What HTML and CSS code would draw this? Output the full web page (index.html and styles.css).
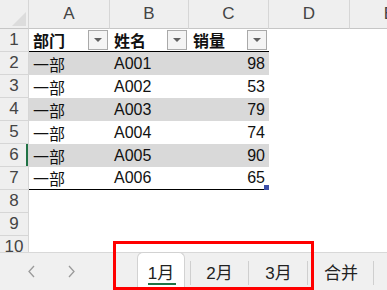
FILE: index.html
```html
<!DOCTYPE html>
<html lang="zh-CN">
<head>
    <meta charset="UTF-8">
    <meta name="viewport" content="width=device-width, initial-scale=1.0">
    <title>销量表</title>
    <link rel="stylesheet" href="styles.css">
</head>
<body>
    <div class="workbook">
        <div class="sheet">
            <div class="grid">
                <div class="corner">
                    <svg width="29" height="29" viewBox="0 0 29 29"><polygon points="26,12 26,26 12,26" fill="#dcdcdc"/></svg>
                </div>
                <div class="col-head">A</div>
                <div class="col-head">B</div>
                <div class="col-head">C</div>
                <div class="col-head">D</div>
                <div class="col-head">E</div>

                <div class="row-head">1</div>
                <div class="cell title">部门<span class="filter"></span></div>
                <div class="cell title">姓名<span class="filter"></span></div>
                <div class="cell title">销量<span class="filter"></span></div>
                <div class="cell"></div>
                <div class="cell"></div>
            </div>
            <div class="grid" id="rows"></div>
        </div>

        <div class="tab-bar">
            <div class="nav">
                <svg width="9" height="13" viewBox="0 0 9 13"><polyline points="7,1 2,6.5 7,12" fill="none" stroke="#9a9a9a" stroke-width="1.3"/></svg>
                <svg width="9" height="13" viewBox="0 0 9 13"><polyline points="2,1 7,6.5 2,12" fill="none" stroke="#9a9a9a" stroke-width="1.3"/></svg>
            </div>
            <div class="tabs">
                <div class="tab active">1月</div>
                <div class="tab first">2月</div>
                <div class="tab">3月</div>
                <div class="tab wide">合并</div>
            </div>
        </div>

        <div class="highlight"></div>
    </div>

    <script>
        const data = [
            ['一部', 'A001', 98],
            ['一部', 'A002', 53],
            ['一部', 'A003', 79],
            ['一部', 'A004', 74],
            ['一部', 'A005', 90],
            ['一部', 'A006', 65]
        ];

        const rows = document.getElementById('rows');
        let html = '';
        for (let r = 2; r <= 10; r++) {
            const item = data[r - 2];
            const band = item && r % 2 === 0 ? ' band' : '';
            const last = r === 7 ? ' last' : '';
            html += `<div class="row-head${r === 6 ? ' current' : ''}">${r}</div>`;
            if (item) {
                html += `<div class="cell${band}${last}">${item[0]}</div>`;
                html += `<div class="cell${band}${last}">${item[1]}</div>`;
                html += `<div class="cell num${band}${last}">${item[2]}${r === 7 ? '<span class="handle"></span>' : ''}</div>`;
            } else {
                html += '<div class="cell"></div><div class="cell"></div><div class="cell"></div>';
            }
            html += '<div class="cell"></div><div class="cell"></div>';
        }
        rows.innerHTML = html;
    </script>
</body>
</html>
```

FILE: styles.css
```css
body {
    margin: 0;
    font-family: "Liberation Sans", "Noto Sans CJK SC", sans-serif;
    font-size: 16px;
    color: #111;
    background: #fff;
}

.workbook {
    position: relative;
    width: 387px;
    height: 290px;
    overflow: hidden;
}

.sheet {
    height: 252px;
    overflow: hidden;
}

.grid {
    display: grid;
    grid-template-columns: 29px 81px 79px 80px 81px 80px;
    grid-auto-rows: 23px;
}

.grid:first-child {
    grid-template-rows: 29px 23px;
}

.corner,
.col-head {
    background: #efefef;
    border-right: 1px solid #d6d6d6;
    border-bottom: 1px solid #c6c6c6;
    box-sizing: border-box;
}

.col-head {
    display: flex;
    align-items: center;
    justify-content: center;
    color: #444;
    font-size: 17px;
}

.row-head {
    background: #efefef;
    border-right: 1px solid #d6d6d6;
    border-bottom: 1px solid #d6d6d6;
    box-sizing: border-box;
    display: flex;
    align-items: center;
    justify-content: center;
    color: #444;
    font-size: 17px;
}

.row-head.current {
    box-shadow: inset -2px 0 0 #217346;
}

.cell {
    position: relative;
    display: flex;
    align-items: center;
    justify-content: space-between;
    padding: 0 2px 0 4px;
    box-sizing: border-box;
    white-space: nowrap;
}

.cell.title {
    font-weight: bold;
    border-bottom: 1px solid #000;
}

.cell.band {
    background: #d9d9d9;
}

.cell.last {
    border-bottom: 1px solid #000;
}

.cell.num {
    justify-content: flex-end;
    padding-right: 4px;
}

.filter {
    width: 20px;
    height: 20px;
    box-sizing: border-box;
    border: 1px solid #a9a9a9;
    background: #f4f4f4;
    display: flex;
    align-items: center;
    justify-content: center;
}

.filter::after {
    content: "";
    border-left: 4px solid transparent;
    border-right: 4px solid transparent;
    border-top: 4px solid #606060;
}

.handle {
    position: absolute;
    right: 0;
    bottom: -1px;
    width: 5px;
    height: 5px;
    background: #3c4fa8;
}

.tab-bar {
    height: 38px;
    background: #f0f0f0;
    border-top: 1px solid #d8d8d8;
    box-sizing: border-box;
    display: flex;
}

.nav {
    width: 137px;
    display: flex;
    align-items: center;
    gap: 31px;
    padding-left: 27px;
    box-sizing: border-box;
}

.tabs {
    display: flex;
}

.tab {
    position: relative;
    display: flex;
    align-items: center;
    justify-content: center;
    width: 59px;
    font-size: 17px;
    color: #222;
}

.tab::after {
    content: "";
    position: absolute;
    right: 0;
    top: 8px;
    bottom: 5px;
    width: 1px;
    background: #cfcfcf;
}

.tab.first::before {
    content: "";
    position: absolute;
    left: 0;
    top: 8px;
    bottom: 5px;
    width: 1px;
    background: #cfcfcf;
}

.tab.wide {
    width: 66px;
}

.tab.active {
    width: 48px;
    margin-top: -1px;
    margin-right: 5px;
    background: #fff;
    border: 1px solid #d2d2d2;
    border-bottom: none;
    border-radius: 6px 6px 0 0;
    box-sizing: border-box;
}

.tab.active::after {
    right: auto;
    left: 10px;
    top: auto;
    bottom: 5px;
    width: 28px;
    height: 2px;
    background: #217346;
}

.highlight {
    position: absolute;
    left: 113px;
    top: 241px;
    width: 201px;
    height: 49px;
    border: 3px solid #f00;
    box-sizing: border-box;
}
```
